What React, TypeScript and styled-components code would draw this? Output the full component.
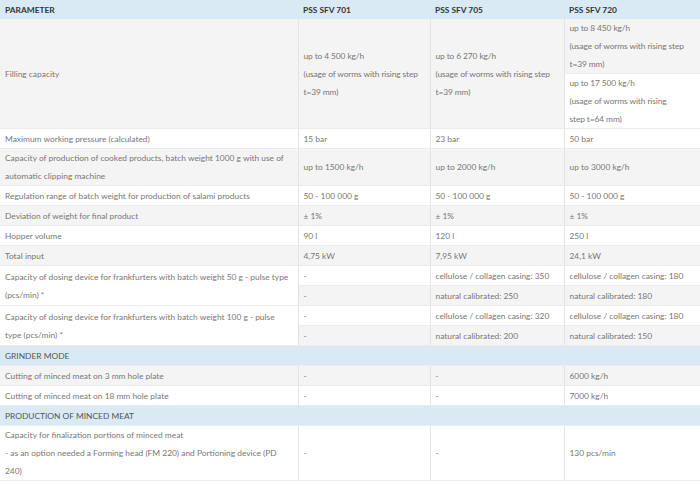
import React from 'react'
import styled, { createGlobalStyle } from 'styled-components'

const GlobalStyle = createGlobalStyle`
    body {
        margin: 0;
        background: #fff;
    }
`

const Table = styled.table`
    width: 700px;
    border-collapse: collapse;
    table-layout: fixed;
    font-family: Lato, "Open Sans", sans-serif;
    font-size: 8.4px;
    line-height: 18px;
    color: #777;
`

const HeadRow = styled.tr`
    background: #d9eaf5;

    th {
        text-align: left;
        font-weight: 700;
        color: #333;
        padding: 1px 5px 0;
        height: 18px;
        line-height: 18px;
    }
`

const Row = styled.tr<{ $shade?: boolean }>`
    background: ${p => (p.$shade ? '#f4f4f4' : '#fff')};
`

const Cell = styled.td`
    height: 19px;
    padding: 0 2px 0 5px;
    vertical-align: middle;
    border-bottom: 1px solid #ebebeb;
    border-left: 1px solid #e4e4e4;

    &:first-child {
        border-left: none;
        padding-right: 5px;
    }
`

const SubCell = styled(Cell)`
    border-left: 1px solid #e4e4e4 !important;
    padding-right: 2px !important;
`

const Line = styled.span`
    display: block;
    white-space: nowrap;
    letter-spacing: -0.1px;
`

const SectionCell = styled.td`
    background: #d9eaf5;
    color: #555;
    padding: 0 5px;
    height: 19px;
    border-bottom: 1px solid #e4eef5;
`

interface Spec {
    label: string
    values: string[]
    shade?: boolean
}

const basic: Spec[] = [
    { label: 'Maximum working pressure (calculated)', values: ['15 bar', '23 bar', '50 bar'] },
    { label: 'Capacity of production of cooked products, batch weight 1000 g with use of automatic clipping machine', values: ['up to 1500 kg/h', 'up to 2000 kg/h', 'up to 3000 kg/h'], shade: true },
    { label: 'Regulation range of batch weight for production of salami products', values: ['50 - 100 000 g', '50 - 100 000 g', '50 - 100 000 g'] },
    { label: 'Deviation of weight for final product', values: ['± 1%', '± 1%', '± 1%'], shade: true },
    { label: 'Hopper volume', values: ['90 l', '120 l', '250 l'] },
    { label: 'Total input', values: ['4,75 kW', '7,95 kW', '24,1 kW'], shade: true },
]

const dosing = [
    {
        label: 'Capacity of dosing device for frankfurters with batch weight 50 g - pulse type (pcs/min) *',
        top: ['-', 'cellulose / collagen casing: 350', 'cellulose / collagen casing: 180'],
        bottom: ['-', 'natural calibrated: 250', 'natural calibrated: 180'],
    },
    {
        label: 'Capacity of dosing device for frankfurters with batch weight 100 g - pulse type (pcs/min) *',
        top: ['-', 'cellulose / collagen casing: 320', 'cellulose / collagen casing: 180'],
        bottom: ['-', 'natural calibrated: 200', 'natural calibrated: 150'],
    },
]

const grinder: Spec[] = [
    { label: 'Cutting of minced meat on 3 mm hole plate', values: ['-', '-', '6000 kg/h'], shade: true },
    { label: 'Cutting of minced meat on 18 mm hole plate', values: ['-', '-', '7000 kg/h'] },
]

const SpecRow = ({ label, values, shade }: Spec) => (
    <Row $shade={shade}>
        <Cell>{label}</Cell>
        {values.map((v, i) => <Cell key={i}>{v}</Cell>)}
    </Row>
)

const Lines = ({ items }: { items: string[] }) => (
    <>{items.map((t, i) => <Line key={i}>{t}</Line>)}</>
)

const App = () => (
    <>
        <GlobalStyle />
        <Table>
            <colgroup>
                <col style={{ width: 298 }} />
                <col style={{ width: 132 }} />
                <col style={{ width: 134 }} />
                <col />
            </colgroup>
            <thead>
                <HeadRow>
                    <th>PARAMETER</th>
                    <th>PSS SFV 701</th>
                    <th>PSS SFV 705</th>
                    <th>PSS SFV 720</th>
                </HeadRow>
            </thead>
            <tbody>
                <Row $shade>
                    <Cell rowSpan={2}>Filling capacity</Cell>
                    <Cell rowSpan={2}>
                        <Lines items={['up to 4 500 kg/h', '(usage of worms with rising step', 't=39 mm)']} />
                    </Cell>
                    <Cell rowSpan={2}>
                        <Lines items={['up to 6 270 kg/h', '(usage of worms with rising step', 't=39 mm)']} />
                    </Cell>
                    <Cell>
                        <Lines items={['up to 8 450 kg/h', '(usage of worms with rising step', 't=39 mm)']} />
                    </Cell>
                </Row>
                <Row>
                    <SubCell>
                        <Lines items={['up to 17 500 kg/h', '(usage of worms with rising', 'step t=64 mm)']} />
                    </SubCell>
                </Row>
                {basic.map((s, i) => <SpecRow key={i} {...s} />)}
                {dosing.map((d, i) => (
                    <React.Fragment key={i}>
                        <Row>
                            <Cell rowSpan={2}>{d.label}</Cell>
                            {d.top.map((v, j) => <Cell key={j}>{v}</Cell>)}
                        </Row>
                        <Row $shade>
                            {d.bottom.map((v, j) => <SubCell key={j}>{v}</SubCell>)}
                        </Row>
                    </React.Fragment>
                ))}
                <tr><SectionCell colSpan={4}>GRINDER MODE</SectionCell></tr>
                {grinder.map((s, i) => <SpecRow key={i} {...s} />)}
                <tr><SectionCell colSpan={4}>PRODUCTION OF MINCED MEAT</SectionCell></tr>
                <Row>
                    <Cell>Capacity for finalization portions of minced meat<br />- as an option needed a Forming head (FM 220) and Portioning device (PD 240)</Cell>
                    <Cell>-</Cell>
                    <Cell>-</Cell>
                    <Cell>130 pcs/min</Cell>
                </Row>
            </tbody>
        </Table>
    </>
)

export default App
